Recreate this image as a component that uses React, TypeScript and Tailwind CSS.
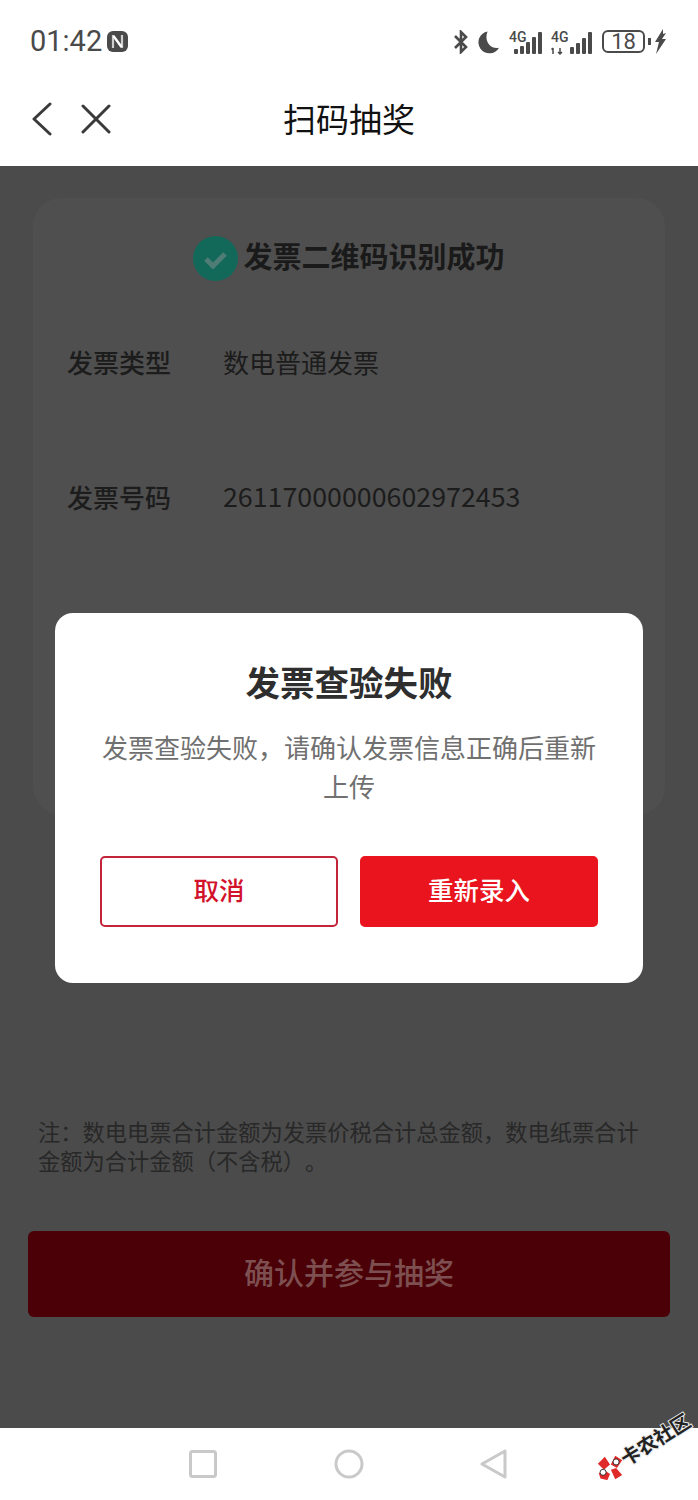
import React from 'react';

const cjk = 'font-["Noto_Sans_CJK_SC","Noto_Sans",sans-serif]';

function Signal({ sub }: { sub?: boolean }) {
  const bars = sub
    ? [{ x: 19, h: 7 }, { x: 25, h: 11 }, { x: 31, h: 16 }, { x: 37, h: 22 }]
    : [{ x: 5, h: 5 }, { x: 11, h: 8 }, { x: 17, h: 12 }, { x: 23, h: 17 }, { x: 29, h: 22 }];
  return (
    <svg width={sub ? 41 : 33} height="30" viewBox={sub ? '0 -4 41 30' : '0 -4 33 30'} fill="#4a4a4a" className="overflow-visible">
      <text x="0" y="11" fontSize="14" fontWeight="500" fontFamily="Roboto, sans-serif">4G</text>
      {sub && <path d="M2 17v6M0.5 18.5L2 17M9 17v6M7 21l2 2 2-2" fill="none" stroke="#4a4a4a" strokeWidth="1.5" />}
      {bars.map(b => <rect key={b.x} x={b.x} y={23 - b.h} width="4" height={b.h} rx="1" />)}
    </svg>
  );
}

function StatusBar() {
  return (
    <div className="h-[80px] bg-white flex items-center justify-between pl-[30px] pr-[31px] pt-[3px]">
      <div className="flex items-center gap-[5px] text-[#4a4a4a]">
        <span className="font-['Roboto',sans-serif] text-[29px] leading-none">01:42</span>
        <svg width="21" height="21" viewBox="0 0 21 21">
          <rect x="0" y="0" width="21" height="21" rx="6" fill="#4a4a4a" />
          <path d="M6 4v13M15 4v13" stroke="#cfcfcf" strokeWidth="2.2" />
          <path d="M6.5 5l8 11" stroke="#fff" strokeWidth="2.4" />
        </svg>
      </div>
      <div className="flex items-center text-[#4a4a4a]">
        <svg width="16" height="24" viewBox="0 0 16 24" fill="none" stroke="#4a4a4a" strokeWidth="2.6" className="mr-[8px]">
          <path d="M2 6l11 11-5 5V2l5 5L2 18" />
        </svg>
        <svg width="23" height="24" viewBox="0 0 24 24" fill="#4a4a4a" className="mr-[9px]">
          <path d="M11 1a11.5 11.5 0 1 0 12 17C14 20 7 11 11 1z" />
        </svg>
        <div className="mr-[9px] flex"><Signal /></div>
        <div className="mr-[10px] flex"><Signal sub /></div>
        <div className="w-[43px] h-[23px] rounded-[6px] border-2 border-[#4a4a4a] flex items-center justify-center font-['Roboto',sans-serif] text-[22px] leading-none">18</div>
        <div className="w-[3px] h-[7px] bg-[#4a4a4a] ml-[3px] mr-[3px]" />
        <svg width="13" height="25" viewBox="0 0 13 25" fill="#4a4a4a">
          <path d="M9 0L1 13h4l-3 12 10-15H8l4-6-3 1z" />
        </svg>
      </div>
    </div>
  );
}

function NavBar() {
  return (
    <div className={`h-[86px] bg-white relative flex items-center justify-center pb-[10px] ${cjk}`}>
      <div className="absolute left-[31px] top-[22px] flex items-center gap-[28px]">
        <svg width="22" height="34" viewBox="0 0 22 34" fill="none" stroke="#3a3a3a" strokeWidth="3" strokeLinecap="round" strokeLinejoin="round">
          <path d="M19 2L3 17l16 15" />
        </svg>
        <svg width="30" height="30" viewBox="0 0 30 30" fill="none" stroke="#3a3a3a" strokeWidth="3" strokeLinecap="round">
          <path d="M2 2l26 26M28 2L2 28" />
        </svg>
      </div>
      <span className="text-[33px] leading-none text-[#111111]">扫码抽奖</span>
    </div>
  );
}

function InfoRow({ label, value, num }: { label: string; value: string; num?: boolean }) {
  return (
    <div className="flex items-center h-[40px] text-[26px] text-[#1c1c1c]">
      <span className="w-[156px] font-medium">{label}</span>
      <span className={num ? 'text-[26.8px]' : 'font-normal'}>{value}</span>
    </div>
  );
}

function Dialog() {
  return (
    <div className="w-[588px] h-[370px] bg-white rounded-[18px] flex flex-col items-center pt-[45px] px-[45px]">
      <h2 className="text-[34.5px] leading-[46px] font-bold text-[#2e2e2e]">发票查验失败</h2>
      <p className="mt-[23px] text-[26px] leading-[39px] text-[#707070] text-center w-[500px]">
        发票查验失败，请确认发票信息正确后重新上传
      </p>
      <div className="mt-[51px] w-full flex justify-between">
        <button className="w-[238px] h-[71px] rounded-[5px] border-2 border-[#c4243a] text-[#d2112a] text-[25.5px] font-medium bg-white pb-[4px]">取消</button>
        <button className="w-[238px] h-[71px] rounded-[5px] bg-[#e9141d] text-white text-[25.5px] font-medium pb-[4px]">重新录入</button>
      </div>
    </div>
  );
}

function Content() {
  return (
    <div className={`relative h-[1262px] bg-[#4b4b4b] flex flex-col ${cjk}`}>
      <div className="mt-[32px] mx-[33px] h-[617px] rounded-[28px] bg-[#4f4f4f] px-[34px] pt-[35px]">
        <div className="flex items-center justify-center gap-[5px]">
          <svg width="45" height="45" viewBox="0 0 45 45">
            <circle cx="22.5" cy="22.5" r="22.5" fill="#12695a" />
            <path d="M13 23l7 7 12-12" fill="none" stroke="#4f7d75" strokeWidth="5" />
          </svg>
          <span className="text-[29px] leading-[45px] font-bold text-[#1a1a1a] pb-[5px]">发票二维码识别成功</span>
        </div>
        <div className="mt-[58px] flex flex-col gap-[95px]">
          <InfoRow label="发票类型" value="数电普通发票" />
          <InfoRow label="发票号码" value="26117000000602972453" num />
        </div>
      </div>
      <p className="mt-[302px] mx-[38px] text-[22.25px] leading-[29px] text-[#282828] [text-spacing-trim:space-all]">
        注：数电电票合计金额为发票价税合计总金额，数电纸票合计金额为合计金额（不含税）。
      </p>
      <button className="mt-[56px] mx-[28px] h-[86px] rounded-[6px] bg-[#4a0006] text-[#7d4f50] text-[30px] font-medium pb-[6px]">确认并参与抽奖</button>
      <div className="absolute inset-0 flex items-center justify-center pt-[2px]">
        <Dialog />
      </div>
    </div>
  );
}

function BottomNav() {
  return (
    <div className="h-[72px] bg-white flex items-center pb-[1px]">
      <svg width="28" height="28" viewBox="0 0 28 28" fill="none" stroke="#c9c9c9" strokeWidth="3" className="ml-[189px]">
        <rect x="1.5" y="1.5" width="25" height="25" rx="2" />
      </svg>
      <svg width="30" height="30" viewBox="0 0 30 30" fill="none" stroke="#c9c9c9" strokeWidth="3" className="ml-[117px]">
        <circle cx="15" cy="15" r="13" />
      </svg>
      <svg width="27" height="30" viewBox="0 0 27 30" fill="none" stroke="#c9c9c9" strokeWidth="3" strokeLinejoin="round" className="ml-[116px]">
        <path d="M25 2v26L2 15z" />
      </svg>
    </div>
  );
}

function Watermark() {
  return (
    <div className={`absolute left-[599px] top-[1461px] h-[26px] flex items-center -rotate-[32deg] origin-left ${cjk}`}>
      <svg width="26" height="26" viewBox="0 0 30 30" className="shrink-0 rotate-[32deg]">
        <path d="M1 11l8-8 6 9-7 6zM16 12l5-10 8 5-6 9zM2 22l7-3 6 4-3 7-8-2zM16 18l6-2 7 8-8 5z" fill="#e02a2a" />
        <circle cx="7" cy="21" r="3.5" fill="#fff" stroke="#222" />
        <circle cx="22" cy="9" r="3.5" fill="#fff" stroke="#222" />
      </svg>
      <span className="ml-[1px] text-[19.5px] leading-none font-bold text-[#222222] whitespace-nowrap [-webkit-text-stroke:2px_#e8e8e8] [paint-order:stroke_fill]">卡农社区</span>
    </div>
  );
}

export default function App() {
  return (
    <div className="relative w-[698px] h-[1500px] overflow-hidden bg-white">
      <StatusBar />
      <NavBar />
      <Content />
      <BottomNav />
      <Watermark />
    </div>
  );
}
